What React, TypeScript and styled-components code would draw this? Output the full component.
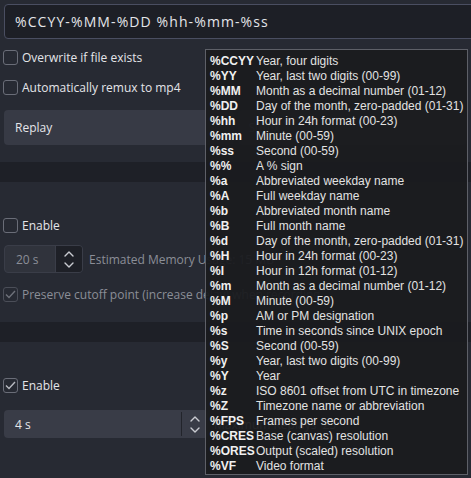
import React from 'react';
import styled, { createGlobalStyle } from 'styled-components';

const GlobalStyle = createGlobalStyle`
  html, body {
    margin: 0;
    padding: 0;
    background: #272a33;
  }
  * {
    box-sizing: border-box;
  }
`;

const Page = styled.div`
  position: relative;
  width: 471px;
  height: 478px;
  overflow: hidden;
  background: #272a33;
  padding-top: 4px;
  display: flex;
  flex-direction: column;
  font-family: 'Open Sans', 'Noto Sans', sans-serif;
  font-size: 12px;
  color: #e4e5e9;
`;

const Inset = styled.div<{ $top?: number }>`
  padding: 0 4px;
  margin-top: ${(p) => p.$top || 0}px;
`;

const FormatInput = styled.div`
  height: 35px;
  width: 480px;
  background: #1d1f26;
  border: 1px solid #4a4e61;
  border-radius: 4px;
  padding: 0 10px;
  display: flex;
  align-items: center;
  font-size: 14px;
  letter-spacing: 1.1px;
`;

const CheckRow = styled.label<{ $top: number; $disabled?: boolean }>`
  display: flex;
  align-items: center;
  gap: 4px;
  height: 15px;
  margin-top: ${(p) => p.$top}px;
  padding-left: 3px;
  white-space: nowrap;
  color: ${(p) => (p.$disabled ? '#8b8e97' : '#e4e5e9')};
`;

const Box = styled.span<{ $disabled?: boolean }>`
  width: 15px;
  height: 15px;
  flex: none;
  border: 1px solid ${(p) => (p.$disabled ? '#4b4e58' : '#6a6d78')};
  border-radius: 3px;
  display: flex;
  align-items: center;
  justify-content: center;
`;

const FieldRow = styled.div<{ $top: number }>`
  display: flex;
  gap: 4px;
  height: 35px;
  margin-top: ${(p) => p.$top}px;
  padding: 0 4px;
`;

const Field = styled.div<{ $placeholder?: boolean }>`
  flex: 1;
  background: #373a45;
  border-radius: 4px;
  padding: 0 11px;
  display: flex;
  align-items: center;
  color: ${(p) => (p.$placeholder ? '#7c7f89' : '#e4e5e9')};
`;

const SectionBar = styled.div<{ $top: number }>`
  height: 20px;
  margin-top: ${(p) => p.$top}px;
  background: #1e2027;
`;

const SpinRow = styled.div<{ $top: number }>`
  display: flex;
  align-items: center;
  gap: 6px;
  height: 28px;
  margin-top: ${(p) => p.$top}px;
  padding: 0 4px;
  white-space: nowrap;
`;

const Spin = styled.div<{ $width: number; $disabled?: boolean }>`
  width: ${(p) => p.$width}px;
  height: 28px;
  flex: none;
  display: flex;
  border-radius: 4px;
  overflow: hidden;
  background: ${(p) => (p.$disabled ? '#30333c' : '#393c47')};
  border: ${(p) => (p.$disabled ? '1px solid #3a3d48' : 'none')};
`;

const SpinValue = styled.div<{ $disabled?: boolean }>`
  flex: 1;
  display: flex;
  align-items: center;
  padding-left: 11px;
  color: ${(p) => (p.$disabled ? '#8b8e97' : '#e4e5e9')};
`;

const SpinButtons = styled.div<{ $disabled?: boolean }>`
  width: 27px;
  display: flex;
  flex-direction: column;
  align-items: center;
  justify-content: center;
  gap: 5px;
  background: ${(p) => (p.$disabled ? '#1e2027' : 'transparent')};
  border-left: 1px solid ${(p) => (p.$disabled ? '#3a3d48' : '#22242b')};
  margin: ${(p) => (p.$disabled ? '0' : '2px 0')};
`;

const SideLabel = styled.span<{ $faint?: boolean }>`
  color: ${(p) => (p.$faint ? '#8b8e97' : '#e4e5e9')};
`;

const Tooltip = styled.div`
  position: absolute;
  left: 205px;
  top: 49px;
  width: 263px;
  height: 426px;
  padding: 3px 4px;
  background: rgba(26, 27, 31, 0.95);
  border: 1px solid #5e6068;
  font-family: 'Liberation Sans', Arial, sans-serif;
  font-size: 12px;
  color: #e2e2e2;
  display: grid;
  grid-template-columns: 46px auto;
  grid-auto-rows: 15px;
  align-items: center;
  white-space: nowrap;
`;

const Token = styled.span`
  font-weight: bold;
  color: #f0f0f0;
`;

const Chevron = ({ up }: { up?: boolean }) => (
  <svg width="10" height="6" viewBox="0 0 10 6">
    <path
      d={up ? 'M1 5 L5 1 L9 5' : 'M1 1 L5 5 L9 1'}
      fill="none"
      stroke="#c9cbd1"
      strokeWidth="1.4"
      strokeLinecap="round"
      strokeLinejoin="round"
    />
  </svg>
);

const Check = ({ color }: { color: string }) => (
  <svg width="11" height="9" viewBox="0 0 11 9">
    <path d="M1 4.5 L4 7.5 L10 1" fill="none" stroke={color} strokeWidth="1.4" />
  </svg>
);

const formatCodes: [string, string][] = [
  ['%CCYY', 'Year, four digits'],
  ['%YY', 'Year, last two digits (00-99)'],
  ['%MM', 'Month as a decimal number (01-12)'],
  ['%DD', 'Day of the month, zero-padded (01-31)'],
  ['%hh', 'Hour in 24h format (00-23)'],
  ['%mm', 'Minute (00-59)'],
  ['%ss', 'Second (00-59)'],
  ['%%', 'A % sign'],
  ['%a', 'Abbreviated weekday name'],
  ['%A', 'Full weekday name'],
  ['%b', 'Abbreviated month name'],
  ['%B', 'Full month name'],
  ['%d', 'Day of the month, zero-padded (01-31)'],
  ['%H', 'Hour in 24h format (00-23)'],
  ['%I', 'Hour in 12h format (01-12)'],
  ['%m', 'Month as a decimal number (01-12)'],
  ['%M', 'Minute (00-59)'],
  ['%p', 'AM or PM designation'],
  ['%s', 'Time in seconds since UNIX epoch'],
  ['%S', 'Second (00-59)'],
  ['%y', 'Year, last two digits (00-99)'],
  ['%Y', 'Year'],
  ['%z', 'ISO 8601 offset from UTC in timezone'],
  ['%Z', 'Timezone name or abbreviation'],
  ['%FPS', 'Frames per second'],
  ['%CRES', 'Base (canvas) resolution'],
  ['%ORES', 'Output (scaled) resolution'],
  ['%VF', 'Video format'],
];

function App() {
  return (
    <Page>
      <GlobalStyle />
      <Inset>
        <FormatInput>%CCYY-%MM-%DD %hh-%mm-%ss</FormatInput>
      </Inset>

      <CheckRow $top={11}>
        <Box />
        Overwrite if file exists
      </CheckRow>
      <CheckRow $top={15}>
        <Box />
        Automatically remux to mp4
      </CheckRow>

      <FieldRow $top={15}>
        <Field>Replay</Field>
        <Field $placeholder>Suffix</Field>
      </FieldRow>

      <SectionBar $top={17} />

      <CheckRow $top={36}>
        <Box />
        Enable
      </CheckRow>
      <SpinRow $top={12}>
        <Spin $width={79} $disabled>
          <SpinValue $disabled>20 s</SpinValue>
          <SpinButtons $disabled>
            <Chevron up />
            <Chevron />
          </SpinButtons>
        </Spin>
        <SideLabel $faint>Estimated Memory Usage: 15 MB</SideLabel>
      </SpinRow>
      <CheckRow $top={14} $disabled>
        <Box $disabled>
          <Check color="#6f727b" />
        </Box>
        Preserve cutoff point (increase delay) when recording
      </CheckRow>

      <SectionBar $top={20} />

      <CheckRow $top={36}>
        <Box>
          <Check color="#b9bbc2" />
        </Box>
        Enable
      </CheckRow>
      <SpinRow $top={17}>
        <Spin $width={204}>
          <SpinValue>4 s</SpinValue>
          <SpinButtons>
            <Chevron up />
            <Chevron />
          </SpinButtons>
        </Spin>
        <SideLabel>Maximum Replays</SideLabel>
        <SideLabel>25</SideLabel>
      </SpinRow>

      <Tooltip>
        {formatCodes.map(([code, text]) => (
          <React.Fragment key={code}>
            <Token>{code}</Token>
            <span>{text}</span>
          </React.Fragment>
        ))}
      </Tooltip>
    </Page>
  );
}

export default App;
